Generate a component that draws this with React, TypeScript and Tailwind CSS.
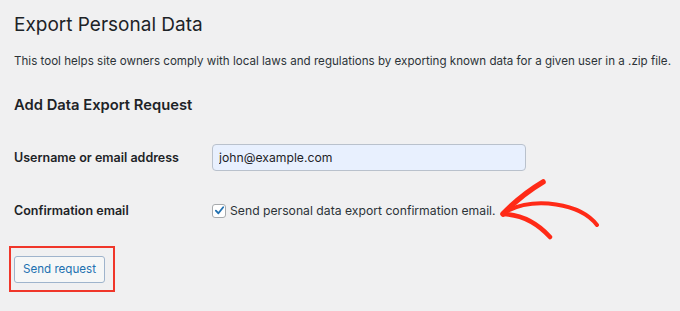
import React from 'react';

const font = { fontFamily: 'Inter, "Liberation Sans", sans-serif' };

export default function App() {
  return (
    <div
      className="relative w-full h-[311px] overflow-hidden bg-[#f0f0f1] text-[#1d2327] pl-[14px] pt-[13px]"
      style={font}
    >
      <h1 className="text-[19px] leading-[24px] font-normal">Export Personal Data</h1>

      <p className="mt-[16px] text-[11.6px] leading-[16px] text-[#2c3338] whitespace-nowrap">
        This tool helps site owners comply with local laws and regulations by exporting known data
        for a given user in a .zip file.
      </p>

      <h2 className="mt-[26px] text-[14.75px] leading-[20px] font-semibold">Add Data Export Request</h2>

      <div className="mt-[29px] flex flex-col">
        <div className="flex items-center h-[27px]">
          <label className="w-[198px] text-[12.5px] leading-[17px] font-semibold">
            Username or email address
          </label>
          <input
            type="text"
            defaultValue="john@example.com"
            className="w-[314px] h-[27px] rounded-[4px] border border-[#b9c1cc] bg-[#e8f0fe] px-[6px] text-[12.2px] text-[#1d2327] outline-none"
          />
        </div>

        <div className="mt-[30px] flex items-center h-[20px]">
          <span className="w-[198px] text-[12.5px] leading-[20px] font-semibold">Confirmation email</span>
          <label className="flex items-center gap-[4px] text-[12.2px] text-[#2c3338]">
            <span className="flex items-center justify-center w-[14px] h-[14px] rounded-[3px] border border-[#a7aaad] bg-white">
              <svg width="11" height="11" viewBox="0 0 12 12" fill="none">
                <path
                  d="M2 6.2 L4.8 9 L10 2.5"
                  stroke="#2271b1"
                  strokeWidth="2"
                  strokeLinecap="round"
                  strokeLinejoin="round"
                />
              </svg>
            </span>
            Send personal data export confirmation email.
          </label>
        </div>

        <div className="mt-[34px] relative self-start">
          <button className="w-[91px] h-[27px] rounded-[3px] border border-[#9fb4cc] bg-[#f6f7f7] text-[11.6px] text-[#2271b1]">
            Send request
          </button>
          <span className="absolute left-[-5px] top-[-9px] w-[106px] h-[46px] border-2 border-[#f0362a] pointer-events-none" />
        </div>
      </div>

      <svg
        className="absolute left-[495px] top-[175px]"
        width="110"
        height="70"
        viewBox="0 0 110 70"
        fill="none"
      >
        <path d="M8 39 Q26 20 48 7" stroke="#ff2a17" strokeWidth="5.5" strokeLinecap="round" />
        <path d="M12 36 C40 22 85 28 102 50" stroke="#ff2a17" strokeWidth="4" strokeLinecap="round" />
        <path d="M8 39 Q35 40 55 62" stroke="#ff2a17" strokeWidth="4.5" strokeLinecap="round" />
      </svg>
    </div>
  );
}
